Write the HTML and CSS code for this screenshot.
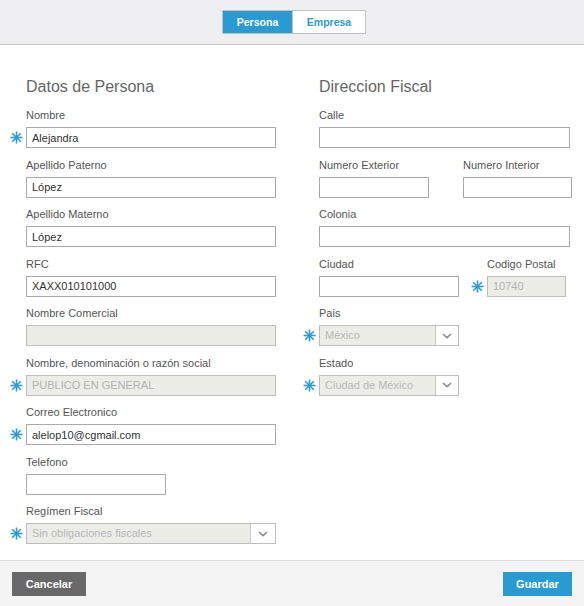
FILE: index.html
```html
<!DOCTYPE html>
<html lang="es">
<head>
<meta charset="utf-8">
<title>Datos</title>
<link rel="stylesheet" href="styles.css">
</head>
<body>
<svg width="0" height="0" class="defs" aria-hidden="true">
  <defs>
    <symbol id="ast" viewBox="0 0 13 13">
      <g stroke="#2a9ad2" stroke-width="1.6" stroke-linecap="butt">
        <line x1="6.5" y1="0.5" x2="6.5" y2="12.5"/>
        <line x1="0.5" y1="6.5" x2="12.5" y2="6.5"/>
        <line x1="2.2" y1="2.2" x2="10.8" y2="10.8"/>
        <line x1="10.8" y1="2.2" x2="2.2" y2="10.8"/>
      </g>
    </symbol>
    <symbol id="chev" viewBox="0 0 10 6">
      <polyline points="1,1 5,4.6 9,1" fill="none" stroke="#8a8a8a" stroke-width="1.6"/>
    </symbol>
  </defs>
</svg>

<header class="header">
  <div class="toggle">
    <button class="tab tab-active">Persona</button>
    <button class="tab tab-empresa">Empresa</button>
  </div>
</header>

<main class="content">
  <section class="col col-left">
    <h2 class="title">Datos de Persona</h2>

    <div class="field">
      <label class="lbl">Nombre</label>
      <div class="ctrl"><svg class="ast"><use href="#ast"/></svg><input class="input" value="Alejandra"></div>
    </div>
    <div class="field">
      <label class="lbl">Apellido Paterno</label>
      <div class="ctrl"><input class="input" value="López"></div>
    </div>
    <div class="field">
      <label class="lbl">Apellido Materno</label>
      <div class="ctrl"><input class="input" value="López"></div>
    </div>
    <div class="field">
      <label class="lbl">RFC</label>
      <div class="ctrl"><input class="input" value="XAXX010101000"></div>
    </div>
    <div class="field">
      <label class="lbl">Nombre Comercial</label>
      <div class="ctrl"><input class="input" value="" disabled></div>
    </div>
    <div class="field">
      <label class="lbl">Nombre, denominación o razón social</label>
      <div class="ctrl"><svg class="ast"><use href="#ast"/></svg><input class="input" value="PUBLICO EN GENERAL" disabled></div>
    </div>
    <div class="field">
      <label class="lbl">Correo Electronico</label>
      <div class="ctrl"><svg class="ast"><use href="#ast"/></svg><input class="input" value="alelop10@cgmail.com"></div>
    </div>
    <div class="field">
      <label class="lbl">Telefono</label>
      <div class="ctrl w-tel"><input class="input" value=""></div>
    </div>
    <div class="field">
      <label class="lbl">Regímen Fiscal</label>
      <div class="ctrl"><svg class="ast"><use href="#ast"/></svg>
        <div class="select"><span class="select-text">Sin obligaciones fiscales</span><span class="select-arrow arrow-wide"><svg class="chev"><use href="#chev"/></svg></span></div>
      </div>
    </div>
  </section>

  <section class="col col-right">
    <h2 class="title">Direccion Fiscal</h2>

    <div class="field">
      <label class="lbl">Calle</label>
      <div class="ctrl w-calle"><input class="input" value=""></div>
    </div>
    <div class="row row-num">
      <div class="field w-ext">
        <label class="lbl">Numero Exterior</label>
        <div class="ctrl"><input class="input" value=""></div>
      </div>
      <div class="field w-int">
        <label class="lbl">Numero Interior</label>
        <div class="ctrl"><input class="input" value=""></div>
      </div>
    </div>
    <div class="field">
      <label class="lbl">Colonia</label>
      <div class="ctrl w-calle"><input class="input" value=""></div>
    </div>
    <div class="row row-city">
      <div class="field w-city">
        <label class="lbl">Ciudad</label>
        <div class="ctrl"><input class="input" value=""></div>
      </div>
      <div class="field w-cp">
        <label class="lbl">Codigo Postal</label>
        <div class="ctrl"><svg class="ast"><use href="#ast"/></svg><input class="input" value="10740" disabled></div>
      </div>
    </div>
    <div class="field">
      <label class="lbl">Pais</label>
      <div class="ctrl w-city"><svg class="ast"><use href="#ast"/></svg>
        <div class="select"><span class="select-text">México</span><span class="select-arrow"><svg class="chev"><use href="#chev"/></svg></span></div>
      </div>
    </div>
    <div class="field">
      <label class="lbl">Estado</label>
      <div class="ctrl w-city"><svg class="ast"><use href="#ast"/></svg>
        <div class="select"><span class="select-text">Ciudad de México</span><span class="select-arrow"><svg class="chev"><use href="#chev"/></svg></span></div>
      </div>
    </div>
  </section>
</main>

<footer class="footer">
  <button class="btn btn-cancel">Cancelar</button>
  <button class="btn btn-save">Guardar</button>
</footer>
</body>
</html>
```

FILE: styles.css
```css
* { box-sizing: border-box; }

html, body { margin: 0; padding: 0; }

body {
  width: 584px;
  height: 606px;
  overflow: hidden;
  display: flex;
  flex-direction: column;
  background: #fff;
  font-family: "Liberation Sans", Arial, sans-serif;
  color: #333;
}

.defs { position: absolute; width: 0; height: 0; }

/* Header */
.header {
  height: 45px;
  flex: none;
  background: #efeff1;
  border-bottom: 1px solid #c8c8c8;
  display: flex;
  justify-content: center;
  padding: 10px 0 0 4px;
}

.toggle {
  display: flex;
  height: 24px;
  border: 1px solid #c2c2c2;
}

.tab {
  margin: 0;
  border: 0;
  padding: 0;
  height: 22px;
  font-family: "Liberation Sans", Arial, sans-serif;
  font-size: 10.5px;
  font-weight: bold;
  background: #fff;
  color: #2a9ad2;
  text-align: center;
}

.tab-active {
  width: 70px;
  background: #2a9ad2;
  color: #fff;
  border-right: 1px solid #c2c2c2;
}

.tab-empresa { width: 72px; }

/* Content */
.content {
  flex: 1;
  display: flex;
  gap: 43px;
  padding: 32px 0 0 26px;
}

.col-left { width: 250px; }
.col-right { width: 253px; }

.title {
  margin: 0 0 10px;
  font-size: 16px;
  line-height: 20px;
  font-weight: normal;
  color: #666;
}

.field { margin-bottom: 8.5px; }

.row { display: flex; }
.row-num { justify-content: space-between; }
.row-city { gap: 28px; }

.lbl {
  display: block;
  font-size: 11px;
  line-height: 16px;
  color: #555;
  margin-bottom: 4px;
  white-space: nowrap;
}

.ctrl {
  position: relative;
  height: 21px;
}

.w-tel { width: 140px; }
.w-calle { width: 251px; }
.w-ext { width: 110px; }
.w-int { width: 109px; }
.w-city { width: 140px; }
.w-cp { width: 79px; }

.ast {
  position: absolute;
  width: 13px;
  height: 13px;
  right: calc(100% + 3px);
  top: 4px;
}

.input {
  display: block;
  width: 100%;
  height: 21px;
  margin: 0;
  border: 1px solid #aaa;
  border-radius: 0;
  padding: 0 5px;
  font-family: "Liberation Sans", Arial, sans-serif;
  font-size: 11px;
  color: #333;
  background: #fff;
  outline: none;
}

.input:disabled {
  background: #ecede7;
  color: #b3b3b3;
  border-color: #bdbdbd;
}

.select {
  display: flex;
  height: 21px;
  border: 1px solid #bdbdbd;
  background: #ecede7;
}

.select-text {
  flex: 1;
  padding-left: 5px;
  font-size: 11px;
  line-height: 19px;
  color: #b8b8b8;
  white-space: nowrap;
  overflow: hidden;
}

.select-arrow {
  width: 23px;
  background: #fff;
  border-left: 1px solid #c8c8c8;
  display: flex;
  align-items: center;
  justify-content: center;
}

.arrow-wide { width: 25px; }

.chev { width: 10px; height: 6px; }

/* Footer */
.footer {
  height: 46px;
  flex: none;
  background: #f4f4f4;
  border-top: 1px solid #dcdcdc;
  display: flex;
  justify-content: space-between;
  align-items: flex-start;
  padding: 11px 12px 0 12px;
}

.btn {
  height: 24px;
  margin: 0;
  border: 0;
  padding: 0;
  font-family: "Liberation Sans", Arial, sans-serif;
  font-size: 11px;
  font-weight: bold;
  color: #fff;
  text-align: center;
}

.btn-cancel { width: 74px; background: #686868; }
.btn-save { width: 69px; background: #2a9ad2; }
```
